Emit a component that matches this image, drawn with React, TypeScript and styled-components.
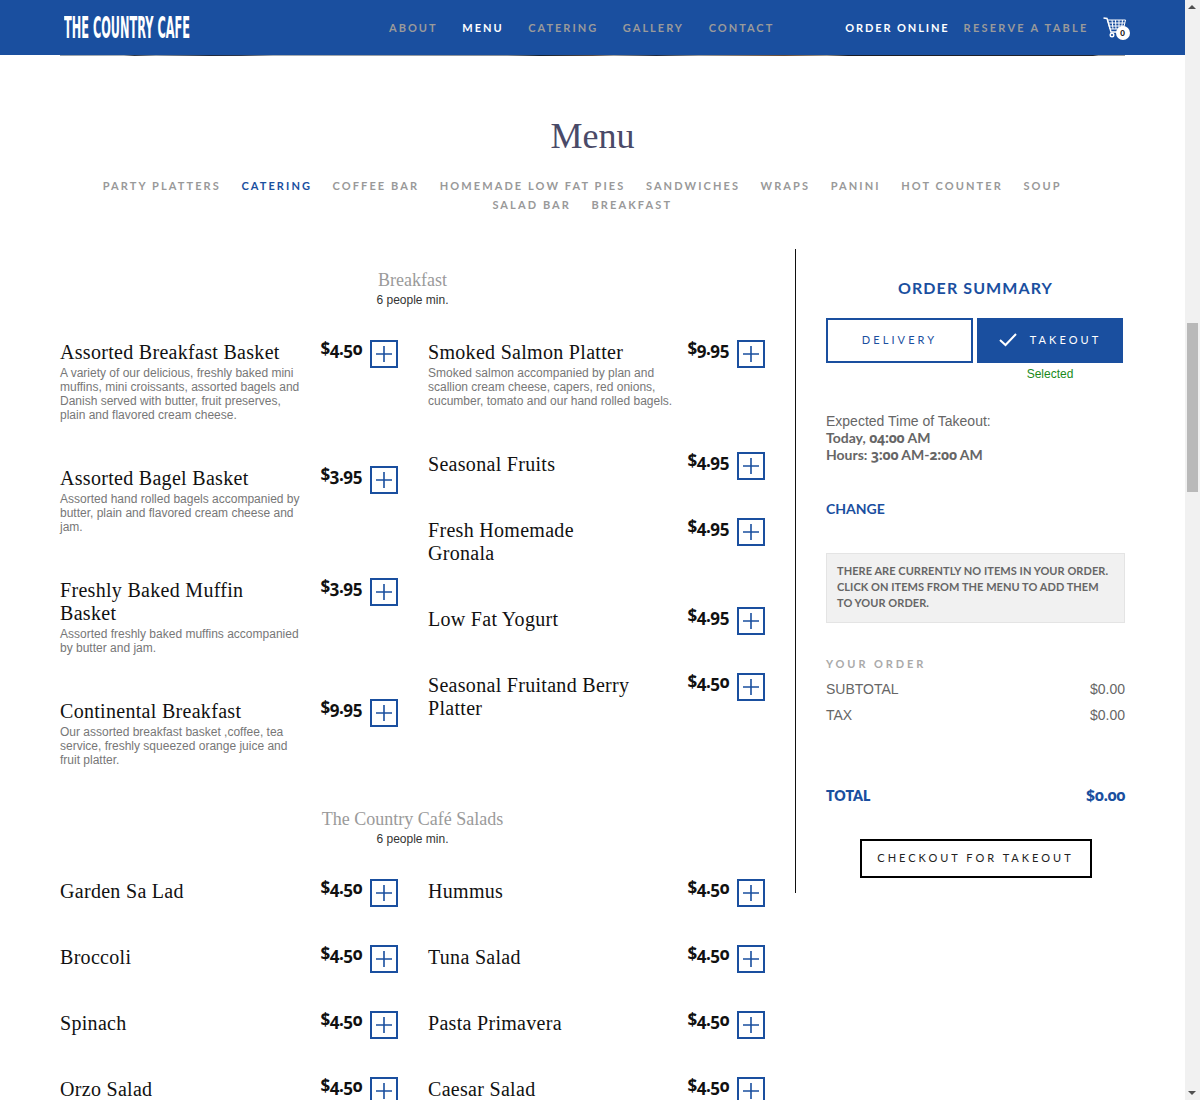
import React from "react"
import styled, { createGlobalStyle } from "styled-components"

const BLUE = "#1a4f9f"
const SANS = `"Lato", "Open Sans", sans-serif`
const FIGURES = `"Open Sans", "Lato", sans-serif`
const SERIF = `"Liberation Serif", serif`
const BODY = `"Liberation Sans", Arial, sans-serif`

const GlobalStyle = createGlobalStyle`
  html, body {
    margin: 0;
    padding: 0;
    height: 1100px;
    overflow: hidden;
    background: #fff;
  }
  * { box-sizing: border-box; }
`

const Viewport = styled.div`
  display: flex;
  width: 1200px;
  height: 1100px;
  overflow: hidden;
`

const Page = styled.div`
  width: 1185px;
  flex: none;
`

const ScrollTrack = styled.div`
  width: 15px;
  flex: none;
  background: #f1f1f1;
  padding-top: 323px;
  position: relative;
`

const ScrollThumb = styled.div`
  width: 11px;
  height: 169px;
  margin-left: 2px;
  background: #b9b9b9;
`

const ScrollArrow = styled.div<{ $bottom?: boolean }>`
  position: absolute;
  left: 3px;
  ${(p) => (p.$bottom ? "bottom: 5px;" : "top: 5px;")}
  width: 0;
  height: 0;
  border-left: 4px solid transparent;
  border-right: 4px solid transparent;
  ${(p) => (p.$bottom ? "border-top: 4px solid #505050;" : "border-bottom: 4px solid #505050;")}
`

const Header = styled.header`
  height: 55px;
  background: ${BLUE};
  display: flex;
  align-items: center;
  padding: 0 54px 0 64px;
`

const Logo = styled.div`
  width: 126px;
  flex: none;
  font-family: "Liberation Sans Narrow", "DejaVu Sans Condensed", ${BODY};
  font-weight: 700;
  font-size: 30px;
  line-height: 30px;
  color: #fff;
  white-space: nowrap;
  transform: scaleX(0.42);
  transform-origin: left center;
`

const MainNav = styled.nav`
  margin-left: 199px;
  display: flex;
  gap: 24.7px;
`

const SideNav = styled.nav`
  margin-left: 71px;
  display: flex;
  gap: 14px;
`

const NavLink = styled.span<{ $active?: boolean; $spacing?: number }>`
  font-family: ${SANS};
  font-size: 11px;
  font-weight: 700;
  letter-spacing: ${(p) => p.$spacing ?? 2}px;
  color: ${(p) => (p.$active ? "#fff" : "#9a9a9a")};
  white-space: nowrap;
`

const CartWrap = styled.div`
  position: relative;
  margin: 4px 0 0 14px;
  width: 28px;
  height: 26px;
`

const CartBadge = styled.span`
  position: absolute;
  left: 13px;
  top: 9px;
  width: 14px;
  height: 14px;
  border-radius: 50%;
  background: #fff;
  color: #111;
  font-family: ${SANS};
  font-size: 8px;
  font-weight: 900;
  line-height: 14px;
  text-align: center;
`

const Strip = styled.div`
  height: 1px;
  margin: 0 60px;
  background: linear-gradient(
    90deg,
    #9aa2ab 0,
    #aab0b6 6%,
    #2f3540 7%,
    #9aa2ab 9%,
    #20283a 14%,
    #30384a 17%,
    #a8aeb4 20%,
    #8a8f96 42%,
    #14202e 45%,
    #5a4a40 50%,
    #a0a0a0 52%,
    #20283a 56%,
    #9a9a9a 60%,
    #6a4a30 68%,
    #a09a90 72%,
    #1a1c24 74%,
    #22242c 97%,
    #a0a0a0 97.5%,
    #a0a0a0 100%
  );
`

const Content = styled.main`
  padding: 0 60px;
`

const Title = styled.h1`
  margin: 59px 0 0;
  font-family: ${SERIF};
  font-weight: 400;
  font-size: 36px;
  line-height: 42px;
  color: #4a4a68;
  text-align: center;
`

const Tabs = styled.div`
  margin: 19px 0 0;
  padding: 0 20px;
  display: flex;
  flex-wrap: wrap;
  justify-content: center;
`

const Tab = styled.span<{ $active?: boolean }>`
  margin-right: 20.5px;
  font-family: ${SANS};
  font-size: 11px;
  font-weight: 700;
  line-height: 19px;
  letter-spacing: 2.1px;
  color: ${(p) => (p.$active ? BLUE : "#999")};
  white-space: nowrap;
`

const Columns = styled.div`
  margin-top: 35px;
  display: flex;
  align-items: flex-start;
  gap: 30px;
`

const MenuArea = styled.div`
  width: 705px;
  flex: none;
`

const SectionHead = styled.div<{ $pull?: number }>`
  margin-top: ${(p) => p.$pull ?? 20}px;
  height: 71px;
  text-align: center;
`

const SectionName = styled.div`
  font-family: ${SERIF};
  font-size: 18px;
  line-height: 22px;
  color: #9a9a9a;
`

const SectionNote = styled.div`
  margin-top: -1px;
  font-family: ${BODY};
  font-size: 12px;
  line-height: 20px;
  color: #333;
`

const ItemGrid = styled.div`
  display: grid;
  grid-template-columns: 338px 337px;
  column-gap: 30px;
  align-items: start;
`

const ItemColumn = styled.div`
  display: flex;
  flex-direction: column;
`

const Item = styled.div`
  display: flex;
  align-items: flex-start;
  margin-bottom: 43px;
`

const ItemText = styled.div<{ $narrow?: boolean }>`
  width: ${(p) => (p.$narrow ? 245 : 240)}px;
  flex: none;
`

const ItemName = styled.div<{ $narrow?: boolean }>`
  margin: 1px 0 -1px;
  max-width: ${(p) => (p.$narrow ? "210px" : "none")};
  font-family: ${SERIF};
  font-size: 20px;
  line-height: 23px;
  letter-spacing: 0.3px;
  color: #111;
`

const ItemDesc = styled.div`
  margin: 3px 0 1px;
  font-family: ${BODY};
  font-size: 12px;
  line-height: 14px;
  color: #777;
`

const Price = styled.div`
  margin-left: auto;
  margin-right: 8px;
  margin-top: -2px;
  font-family: ${FIGURES};
  font-size: 17px;
  font-weight: 700;
  line-height: 22px;
  letter-spacing: -0.5px;
  color: #111;
  font-feature-settings: "onum";
`

const AddButton = styled.button`
  width: 28px;
  height: 28px;
  margin-bottom: -5px;
  padding: 0;
  flex: none;
  display: flex;
  align-items: center;
  justify-content: center;
  background: #fff;
  border: 2px solid ${BLUE};
`

const Sidebar = styled.aside`
  width: 330px;
  height: 644px;
  flex: none;
  border-left: 1px solid #111;
  padding: 29px 0 0 30px;
`

const SummaryTitle = styled.h2`
  margin: 0;
  font-family: ${SANS};
  font-size: 16px;
  font-weight: 700;
  line-height: 20px;
  letter-spacing: 1.1px;
  color: ${BLUE};
  text-align: center;
`

const ModeRow = styled.div`
  margin-top: 20px;
  width: 297px;
  display: flex;
  gap: 4px;
`

const ModeCol = styled.div<{ $w: number }>`
  width: ${(p) => p.$w}px;
  flex: none;
  text-align: center;
`

const ModeButton = styled.div<{ $on?: boolean }>`
  height: 45px;
  padding-bottom: 2px;
  display: flex;
  align-items: center;
  justify-content: center;
  gap: 13px;
  border: 2px solid ${BLUE};
  background: ${(p) => (p.$on ? BLUE : "#fff")};
  color: ${(p) => (p.$on ? "#fff" : BLUE)};
  font-family: ${SANS};
  font-size: 11px;
  letter-spacing: 3.1px;
`

const Selected = styled.div`
  margin-top: 4px;
  font-family: ${BODY};
  font-size: 12px;
  line-height: 14px;
  color: #1a8a1a;
`

const TimeBlock = styled.div`
  margin-top: 32px;
  font-family: ${BODY};
  font-size: 14px;
  line-height: 17px;
  color: #666;
`

const TimeLabel = styled.div`
  margin-bottom: -1px;
`

const TimeStrong = styled.div`
  font-family: ${SANS};
  font-weight: 700;
  color: #666;
`

const TimeFigures = styled.span`
  font-family: ${FIGURES};
  font-size: 14px;
  font-weight: 700;
  letter-spacing: -0.2px;
  font-feature-settings: "onum";
`

const ChangeLink = styled.div`
  margin-top: 37px;
  font-family: ${SANS};
  font-size: 14px;
  font-weight: 700;
  line-height: 18px;
  color: ${BLUE};
`

const Notice = styled.div`
  margin-top: 35px;
  width: 299px;
  height: 70px;
  padding: 9px 10px;
  background: #f1f1f1;
  border: 1px solid #e4e4e4;
  font-family: ${SANS};
  font-size: 11px;
  font-weight: 700;
  line-height: 16px;
  letter-spacing: 0.05px;
  color: #666;
`

const OrderLabel = styled.div`
  margin: 35px 0 6px;
  font-family: ${SANS};
  font-size: 11px;
  font-weight: 700;
  line-height: 12px;
  letter-spacing: 2.9px;
  color: #aaa;
`

const SumRow = styled.div`
  width: 299px;
  height: 26px;
  display: flex;
  align-items: center;
  justify-content: space-between;
  font-family: ${BODY};
  font-size: 14px;
  color: #666;
`

const TotalRow = styled.div`
  width: 299px;
  height: 26px;
  margin-top: 54px;
  display: flex;
  align-items: center;
  justify-content: space-between;
  font-family: ${SANS};
  font-size: 14px;
  font-weight: 800;
  color: ${BLUE};
`

const TotalValue = styled.span`
  font-family: ${FIGURES};
  font-size: 16px;
  font-weight: 700;
  letter-spacing: -0.5px;
  font-feature-settings: "onum";
`

const CheckoutRow = styled.div`
  width: 299px;
  margin-top: 31px;
  display: flex;
  justify-content: center;
`

const Checkout = styled.div`
  width: 232px;
  height: 39px;
  padding-bottom: 2px;
  border: 2px solid #000;
  display: flex;
  align-items: center;
  justify-content: center;
  font-family: ${SANS};
  font-size: 11px;
  letter-spacing: 3px;
  color: #222;
`

const CartIcon = () => (
  <svg width="24" height="22" viewBox="0 0 24 22" fill="none" stroke="#fff" strokeWidth="1">
    <path d="M0.5 1 L4 1.5 L8 15 H20" strokeWidth="1.4" />
    <path d="M4.5 3 H22.5 L20.5 12 H7 Z" />
    <path d="M5.5 6 H22 M6.5 9 H21 M9 3 L10 12 M12.5 3 L13 12 M16 3 L16 12 M19.5 3 L18.5 12" />
    <circle cx="9" cy="18" r="1.8" strokeWidth="1.4" />
    <circle cx="18" cy="18" r="1.8" strokeWidth="1.4" />
  </svg>
)

const PlusIcon = () => (
  <svg width="18" height="18" viewBox="0 0 18 18" stroke={BLUE} strokeWidth="1.6">
    <path d="M9 1 V17 M1 9 H17" />
  </svg>
)

const CheckIcon = () => (
  <svg width="18" height="14" viewBox="0 0 18 14" fill="none" stroke="#fff" strokeWidth="2">
    <path d="M1 7 L6.5 12 L17 1" />
  </svg>
)

type MenuItem = { name: string; price: string; desc?: string }

const breakfastLeft: MenuItem[] = [
  {
    name: "Assorted Breakfast Basket",
    price: "$4.50",
    desc: "A variety of our delicious, freshly baked mini muffins, mini croissants, assorted bagels and Danish served with butter, fruit preserves, plain and flavored cream cheese.",
  },
  {
    name: "Assorted Bagel Basket",
    price: "$3.95",
    desc: "Assorted hand rolled bagels accompanied by butter, plain and flavored cream cheese and jam.",
  },
  {
    name: "Freshly Baked Muffin Basket",
    price: "$3.95",
    desc: "Assorted freshly baked muffins accompanied by butter and jam.",
  },
  {
    name: "Continental Breakfast",
    price: "$9.95",
    desc: "Our assorted breakfast basket ,coffee, tea service, freshly squeezed orange juice and fruit platter.",
  },
]

const breakfastRight: MenuItem[] = [
  {
    name: "Smoked Salmon Platter",
    price: "$9.95",
    desc: "Smoked salmon accompanied by plan and scallion cream cheese, capers, red onions, cucumber, tomato and our hand rolled bagels.",
  },
  { name: "Seasonal Fruits", price: "$4.95" },
  { name: "Fresh Homemade Gronala", price: "$4.95" },
  { name: "Low Fat Yogurt", price: "$4.95" },
  { name: "Seasonal Fruitand Berry Platter", price: "$4.50" },
]

const saladsLeft: MenuItem[] = [
  { name: "Garden Sa Lad", price: "$4.50" },
  { name: "Broccoli", price: "$4.50" },
  { name: "Spinach", price: "$4.50" },
  { name: "Orzo Salad", price: "$4.50" },
]

const saladsRight: MenuItem[] = [
  { name: "Hummus", price: "$4.50" },
  { name: "Tuna Salad", price: "$4.50" },
  { name: "Pasta Primavera", price: "$4.50" },
  { name: "Caesar Salad", price: "$4.50" },
]

const tabs = [
  "PARTY PLATTERS",
  "CATERING",
  "COFFEE BAR",
  "HOMEMADE LOW FAT PIES",
  "SANDWICHES",
  "WRAPS",
  "PANINI",
  "HOT COUNTER",
  "SOUP",
  "SALAD BAR",
  "BREAKFAST",
]

const renderColumn = (items: MenuItem[], narrow?: boolean) => (
  <ItemColumn>
    {items.map((item) => (
      <Item key={item.name}>
        <ItemText $narrow={narrow}>
          <ItemName $narrow={narrow}>{item.name}</ItemName>
          {item.desc && <ItemDesc>{item.desc}</ItemDesc>}
        </ItemText>
        <Price>{item.price}</Price>
        <AddButton>
          <PlusIcon />
        </AddButton>
      </Item>
    ))}
  </ItemColumn>
)

export default function App() {
  return (
    <Viewport>
      <GlobalStyle />
      <Page>
        <Header>
          <Logo>THE COUNTRY CAFE</Logo>
          <MainNav>
            <NavLink>ABOUT</NavLink>
            <NavLink $active>MENU</NavLink>
            <NavLink>CATERING</NavLink>
            <NavLink>GALLERY</NavLink>
            <NavLink>CONTACT</NavLink>
          </MainNav>
          <SideNav>
            <NavLink $active $spacing={1.9}>
              ORDER ONLINE
            </NavLink>
            <NavLink $spacing={2.25}>RESERVE A TABLE</NavLink>
          </SideNav>
          <CartWrap>
            <CartIcon />
            <CartBadge>0</CartBadge>
          </CartWrap>
        </Header>
        <Strip />
        <Content>
          <Title>Menu</Title>
          <Tabs>
            {tabs.map((t) => (
              <Tab key={t} $active={t === "CATERING"}>
                {t}
              </Tab>
            ))}
          </Tabs>
          <Columns>
            <MenuArea>
              <SectionHead>
                <SectionName>Breakfast</SectionName>
                <SectionNote>6 people min.</SectionNote>
              </SectionHead>
              <ItemGrid>
                {renderColumn(breakfastLeft)}
                {renderColumn(breakfastRight, true)}
              </ItemGrid>
              <SectionHead $pull={-3}>
                <SectionName>The Country Café Salads</SectionName>
                <SectionNote>6 people min.</SectionNote>
              </SectionHead>
              <ItemGrid>
                {renderColumn(saladsLeft)}
                {renderColumn(saladsRight, true)}
              </ItemGrid>
            </MenuArea>
            <Sidebar>
              <SummaryTitle>ORDER SUMMARY</SummaryTitle>
              <ModeRow>
                <ModeCol $w={147}>
                  <ModeButton>DELIVERY</ModeButton>
                </ModeCol>
                <ModeCol $w={146}>
                  <ModeButton $on>
                    <CheckIcon />
                    TAKEOUT
                  </ModeButton>
                  <Selected>Selected</Selected>
                </ModeCol>
              </ModeRow>
              <TimeBlock>
                <TimeLabel>Expected Time of Takeout:</TimeLabel>
                <TimeStrong>
                  Today, <TimeFigures>04:00</TimeFigures> AM
                </TimeStrong>
                <TimeStrong>
                  Hours: <TimeFigures>3:00</TimeFigures> AM-<TimeFigures>2:00</TimeFigures> AM
                </TimeStrong>
              </TimeBlock>
              <ChangeLink>CHANGE</ChangeLink>
              <Notice>
                THERE ARE CURRENTLY NO ITEMS IN YOUR ORDER. CLICK ON ITEMS FROM THE MENU TO ADD THEM TO YOUR ORDER.
              </Notice>
              <OrderLabel>YOUR ORDER</OrderLabel>
              <SumRow>
                <span>SUBTOTAL</span>
                <span>$0.00</span>
              </SumRow>
              <SumRow>
                <span>TAX</span>
                <span>$0.00</span>
              </SumRow>
              <TotalRow>
                <span>TOTAL</span>
                <TotalValue>$0.00</TotalValue>
              </TotalRow>
              <CheckoutRow>
                <Checkout>CHECKOUT FOR TAKEOUT</Checkout>
              </CheckoutRow>
            </Sidebar>
          </Columns>
        </Content>
      </Page>
      <ScrollTrack>
        <ScrollArrow />
        <ScrollThumb />
        <ScrollArrow $bottom />
      </ScrollTrack>
    </Viewport>
  )
}
